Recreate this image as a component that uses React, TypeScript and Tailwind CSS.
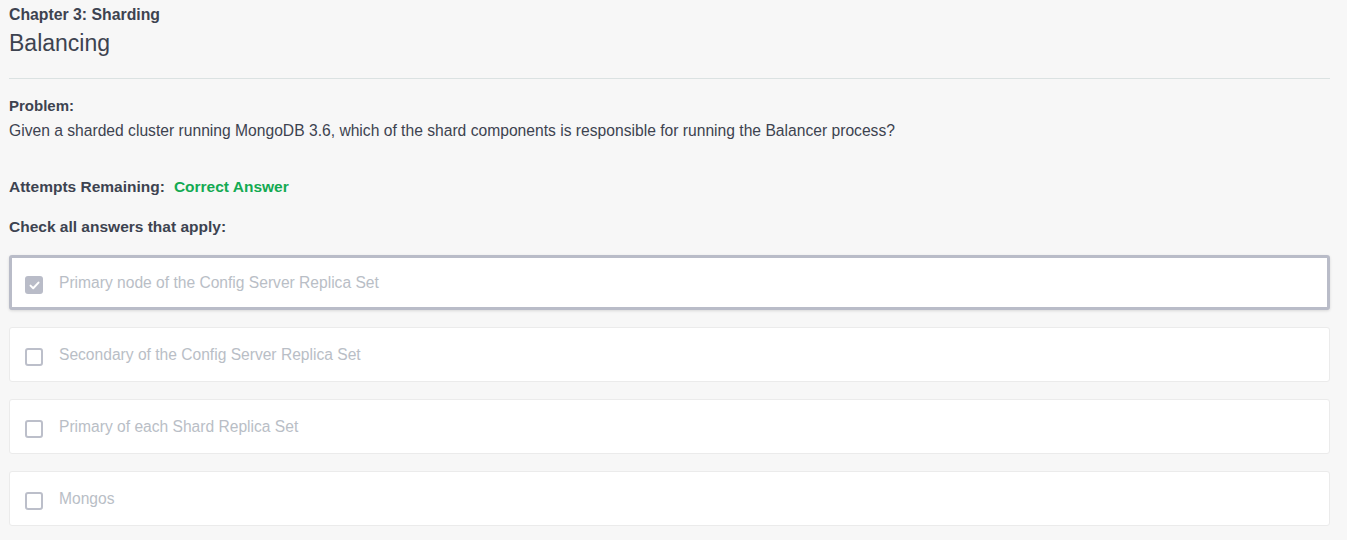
import React from "react";

const options = [
  { label: "Primary node of the Config Server Replica Set", checked: true },
  { label: "Secondary of the Config Server Replica Set", checked: false },
  { label: "Primary of each Shard Replica Set", checked: false },
  { label: "Mongos", checked: false },
];

function Box({ checked }: { checked: boolean }) {
  return checked ? (
    <div className="flex h-[18px] w-[18px] shrink-0 items-center justify-center rounded-[3px] bg-[#b9bcc8]">
      <svg width="11" height="9" viewBox="0 0 11 9" fill="none">
        <path d="M1.5 4.6L4.2 7.2L9.5 1.6" stroke="white" strokeWidth="2" strokeLinecap="round" strokeLinejoin="round" />
      </svg>
    </div>
  ) : (
    <div className="h-[18px] w-[18px] shrink-0 rounded-[3px] border-2 border-[#bcbfca] bg-white" />
  );
}

export default function App() {
  return (
    <div className="min-h-[540px] bg-[#f7f7f7] px-[9px] pt-[5px] text-[#3d4350]" style={{ fontFamily: "'Liberation Sans', Arial, sans-serif" }}>
      <div className="w-[1321px]">
        <div className="text-[15.8px] font-bold leading-[20px]">Chapter 3: Sharding</div>
        <div className="mt-[4px] text-[23px] leading-[28px]">Balancing</div>
        <div className="mt-[21px] h-px bg-[#dbe2e2]" />
        <div className="mt-[17px] text-[15px] font-bold leading-[20px]">Problem:</div>
        <div className="mt-[5px] text-[15.65px] leading-[20px]">
          Given a sharded cluster running MongoDB 3.6, which of the shard components is responsible for running the Balancer process?
        </div>
        <div className="mt-[36px] flex gap-[9px] text-[15.5px] font-bold leading-[20px]">
          <span>Attempts Remaining:</span>
          <span className="text-[#13aa52]">Correct Answer</span>
        </div>
        <div className="mt-[20px] text-[15.5px] font-bold leading-[20px]">Check all answers that apply:</div>
        <div className="mt-[18px] flex flex-col gap-[17px]">
          {options.map((o) => (
            <div
              key={o.label}
              className={
                o.checked
                  ? "flex h-[55px] items-center gap-[16px] rounded-[3px] border-[3px] border-[#b9bcc8] bg-white pl-[13px] shadow-[0_1px_3px_rgba(0,0,0,0.12)]"
                  : "flex h-[55px] items-center gap-[16px] rounded-[3px] border border-[#ebebeb] bg-white pl-[15px]"
              }
            >
              <div className="pt-[5px]">
                <Box checked={o.checked} />
              </div>
              <span className="text-[15.6px] text-[#b9bec6]">{o.label}</span>
            </div>
          ))}
        </div>
      </div>
    </div>
  );
}
